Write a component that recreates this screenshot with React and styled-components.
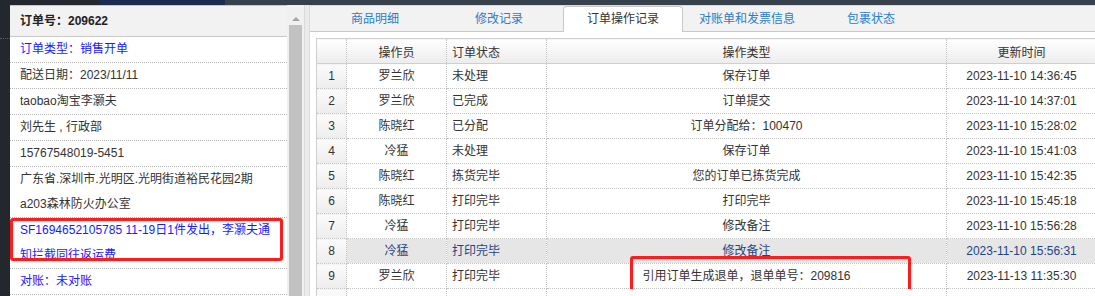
import styled, { createGlobalStyle } from 'styled-components';

const GlobalStyle = createGlobalStyle`
  body {
    margin: 0;
    background: #23272e;
    font-family: "Liberation Sans", "Noto Sans CJK SC", sans-serif;
    font-size: 12px;
    color: #333;
  }
`;

const Page = styled.div`
  width: 1095px;
  height: 296px;
  display: flex;
  flex-direction: column;
  overflow: hidden;
`;

const TopStrip = styled.div`
  height: 5px;
  display: flex;
`;

const StripPart = styled.div`
  width: ${(p) => p.$w || 'auto'};
  flex: ${(p) => (p.$w ? 'none' : 1)};
  background: ${(p) => p.$bg};
`;

const Main = styled.div`
  flex: 1;
  display: flex;
  min-height: 0;
`;

const Gutter = styled.div`
  width: 10px;
  background: #23272e;
  border-top: 1px dotted #555b63;
  margin-top: 33px;
`;

// left info panel
const InfoPanel = styled.div`
  width: 277px;
  background: #fff;
  border-top: 1px solid #c8c8c8;
  display: flex;
  flex-direction: column;
`;

const InfoHeader = styled.div`
  height: 30px;
  line-height: 30px;
  padding: 0 10px;
  background: #f2f2f2;
  border-bottom: 1px solid #c8c8c8;
  font-weight: bold;
  color: #222;
`;

const InfoRow = styled.div`
  position: relative;
  padding: 0 10px;
  line-height: 25px;
  border-bottom: 1px dotted #b8b8b8;
  color: ${(p) => (p.$blue ? '#1a1aff' : '#333')};
`;

const Mark = styled.div`
  position: absolute;
  left: ${(p) => p.$left}px;
  top: ${(p) => p.$top}px;
  width: ${(p) => p.$width}px;
  height: ${(p) => p.$height}px;
  border: 3px solid #ff1c1c;
  border-radius: 3px;
  box-sizing: border-box;
  pointer-events: none;
`;

const Scrollbar = styled.div`
  width: 17px;
  background: #f0f0f0;
  display: flex;
  flex-direction: column;
  align-items: center;
`;

const ArrowUp = styled.div`
  margin: 12px 0 4px;
  width: 0;
  height: 0;
  border-left: 4px solid transparent;
  border-right: 4px solid transparent;
  border-bottom: 4px solid #a3a3a3;
`;

const Thumb = styled.div`
  flex: 1;
  width: 13px;
  background: #c1c1c1;
`;

const Divider = styled.div`
  width: 4px;
  background: #ebebeb;
  border-left: 1px solid #dadada;
  border-right: 1px solid #dadada;
`;

// right panel with tabs
const RightPanel = styled.div`
  flex: 1;
  min-width: 0;
  background: #fff;
  display: flex;
  flex-direction: column;
  overflow: hidden;
  border-top: 1px solid #d8d8d8;
`;

const TabBar = styled.div`
  height: 27px;
  background: #f2f2f2;
  border-bottom: 1px solid #c8c8c8;
  display: flex;
  align-items: flex-end;
  gap: 4px;
  padding-left: 5px;
`;

const Tab = styled.div`
  width: 120px;
  height: 26px;
  line-height: 25px;
  text-align: center;
  box-sizing: border-box;
  color: ${(p) => (p.$active ? '#333' : '#2b7dc6')};
  background: ${(p) => (p.$active ? '#fff' : 'transparent')};
  border: 1px solid ${(p) => (p.$active ? '#c8c8c8' : 'transparent')};
  border-bottom: none;
  border-radius: 4px 4px 0 0;
  margin-bottom: -1px;
`;

const TableWrap = styled.div`
  padding: 6px 0 0 6px;
`;

const Grid = styled.table`
  border-collapse: collapse;
  table-layout: fixed;
  width: 780px;
`;

const Th = styled.th`
  height: 24px;
  padding: 0 5px;
  font-weight: normal;
  color: #333;
  text-align: ${(p) => p.$align || 'center'};
  background: linear-gradient(#ffffff, #ececec);
  border-top: 1px solid #cfcfcf;
  border-bottom: 1px solid #cfcfcf;
  border-right: 1px dotted #c4c4c4;
  &:first-child {
    border-left: 1px solid #cfcfcf;
  }
`;

const Td = styled.td`
  position: relative;
  height: 24px;
  padding: 0 5px;
  line-height: 18px;
  white-space: nowrap;
  text-align: ${(p) => p.$align || 'center'};
  border-bottom: 1px dotted #c4c4c4;
  border-right: 1px dotted #c4c4c4;
  background: ${(p) => (p.$sel ? '#e6e6e6' : '#fff')};
  color: ${(p) => (p.$sel ? '#1d4585' : '#333')};
`;

const IndexTd = styled.td`
  height: 24px;
  padding: 0;
  line-height: 18px;
  text-align: center;
  color: #333;
  background: linear-gradient(#fbfbfb, #ededed);
  border-left: 1px solid #cfcfcf;
  border-bottom: 1px dotted #c4c4c4;
  border-right: 1px dotted #c4c4c4;
`;

const tabs = ['商品明细', '修改记录', '订单操作记录', '对账单和发票信息', '包裹状态'];

const records = [
  ['罗兰欣', '未处理', '保存订单', '2023-11-10 14:36:45'],
  ['罗兰欣', '已完成', '订单提交', '2023-11-10 14:37:01'],
  ['陈晓红', '已分配', '订单分配给：100470', '2023-11-10 15:28:02'],
  ['冷猛', '未处理', '保存订单', '2023-11-10 15:41:03'],
  ['陈晓红', '拣货完毕', '您的订单已拣货完成', '2023-11-10 15:42:35'],
  ['陈晓红', '打印完毕', '打印完毕', '2023-11-10 15:45:18'],
  ['冷猛', '打印完毕', '修改备注', '2023-11-10 15:56:28'],
  ['冷猛', '打印完毕', '修改备注', '2023-11-10 15:56:31'],
  ['罗兰欣', '打印完毕', '引用订单生成退单，退单单号：209816', '2023-11-13 11:35:30'],
];

export default function App() {
  return (
    <Page>
      <GlobalStyle />
      <TopStrip>
        <StripPart $w="100px" $bg="#23272e" />
        <StripPart $w="125px" $bg="#1b2c4e" />
        <StripPart $bg="#37414b" />
      </TopStrip>
      <Main>
        <Gutter />
        <InfoPanel>
          <InfoHeader>订单号：209622</InfoHeader>
          <InfoRow $blue>订单类型：销售开单</InfoRow>
          <InfoRow>配送日期：2023/11/11</InfoRow>
          <InfoRow>taobao淘宝李灏夫</InfoRow>
          <InfoRow>刘先生 , 行政部</InfoRow>
          <InfoRow>15767548019-5451</InfoRow>
          <InfoRow>广东省.深圳市.光明区.光明街道裕民花园2期a203森林防火办公室</InfoRow>
          <InfoRow $blue>
            SF1694652105785 11-19日1件发出，李灏夫通知拦截同往返运费
            <Mark $left={0} $top={0} $width={273} $height={43} />
          </InfoRow>
          <InfoRow $blue>对账：未对账</InfoRow>
        </InfoPanel>
        <Scrollbar>
          <ArrowUp />
          <Thumb />
        </Scrollbar>
        <Divider />
        <RightPanel>
          <TabBar>
            {tabs.map((t, i) => (
              <Tab key={t} $active={i === 2}>
                {t}
              </Tab>
            ))}
          </TabBar>
          <TableWrap>
            <Grid>
              <colgroup>
                <col style={{ width: 30 }} />
                <col style={{ width: 100 }} />
                <col style={{ width: 100 }} />
                <col style={{ width: 400 }} />
                <col style={{ width: 150 }} />
              </colgroup>
              <thead>
                <tr>
                  <Th />
                  <Th>操作员</Th>
                  <Th $align="left">订单状态</Th>
                  <Th>操作类型</Th>
                  <Th>更新时间</Th>
                </tr>
              </thead>
              <tbody>
                {records.map((r, i) => {
                  const sel = i === 7;
                  return (
                    <tr key={i}>
                      <IndexTd>{i + 1}</IndexTd>
                      <Td $sel={sel}>{r[0]}</Td>
                      <Td $sel={sel} $align="left">{r[1]}</Td>
                      <Td $sel={sel}>
                        {r[2]}
                        {i === 8 && <Mark $left={83} $top={-8} $width={281} $height={37} />}
                      </Td>
                      <Td $sel={sel}>{r[3]}</Td>
                    </tr>
                  );
                })}
                <tr>
                  <IndexTd />
                  <Td />
                  <Td />
                  <Td />
                  <Td />
                </tr>
              </tbody>
            </Grid>
          </TableWrap>
        </RightPanel>
      </Main>
    </Page>
  );
}
